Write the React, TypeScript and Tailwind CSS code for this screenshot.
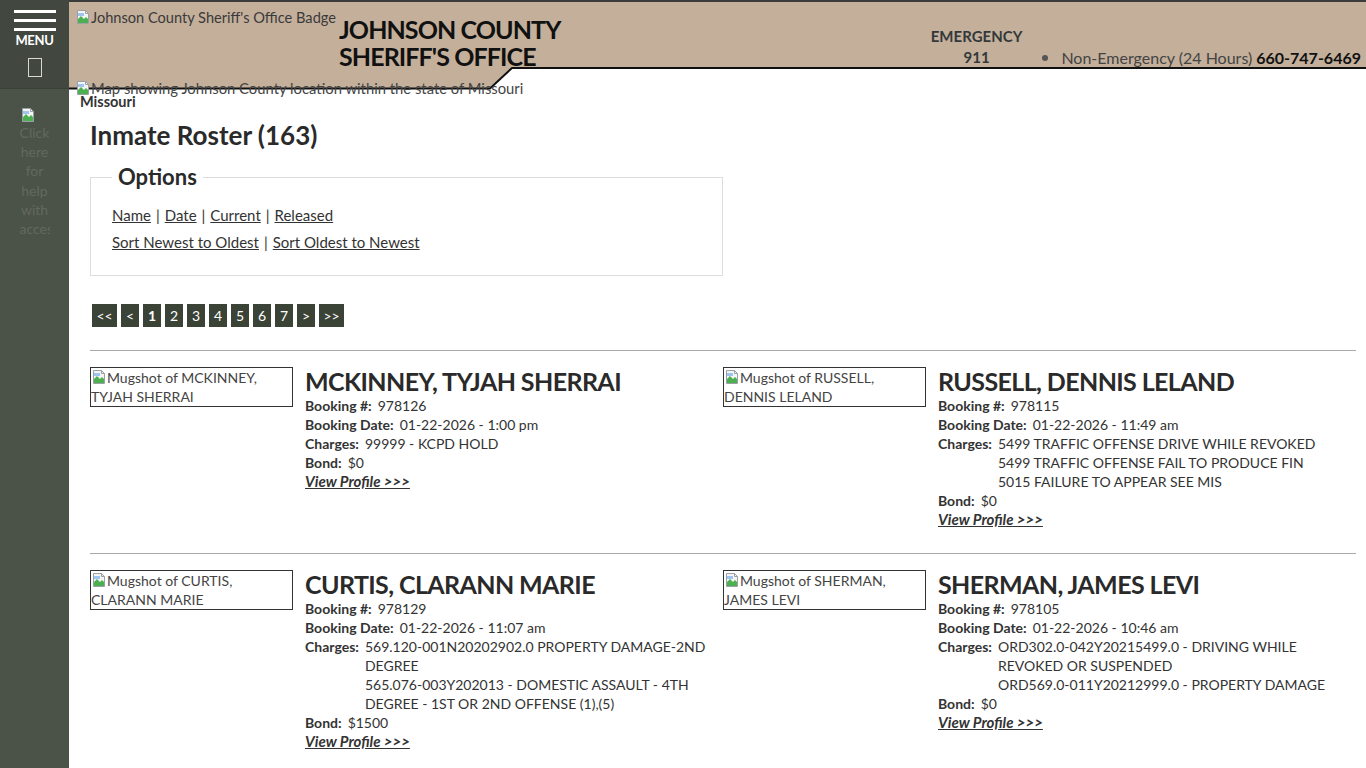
import React from "react";

const FONT = { fontFamily: "Lato, 'Open Sans', Arial, sans-serif" };

function BrokenImg() {
  return (
    <svg width="16" height="16" viewBox="0 0 16 16" className="inline-block shrink-0 align-[-2px]">
      <path d="M2.5 1.5h8l3 3v10h-11z" fill="#f4f4f4" stroke="#9aa0a6" />
      <path d="M10.5 1.5v3h3" fill="none" stroke="#9aa0a6" />
      <path d="M3 10l3-3 3 3 2-2 2 2v4H3z" fill="#4caf50" />
      <rect x="3" y="4" width="6" height="3" fill="#9ec5f0" />
    </svg>
  );
}

type Rec = {
  name: string;
  alt: string;
  booking: string;
  date: string;
  charges: string[][];
  bond: string;
};

const rows: Rec[][] = [
  [
    {
      name: "MCKINNEY, TYJAH SHERRAI",
      alt: "Mugshot of MCKINNEY, TYJAH SHERRAI",
      booking: "978126",
      date: "01-22-2026 - 1:00 pm",
      charges: [["99999 - KCPD HOLD"]],
      bond: "$0",
    },
    {
      name: "RUSSELL, DENNIS LELAND",
      alt: "Mugshot of RUSSELL, DENNIS LELAND",
      booking: "978115",
      date: "01-22-2026 - 11:49 am",
      charges: [
        ["5499 TRAFFIC OFFENSE DRIVE WHILE REVOKED"],
        ["5499 TRAFFIC OFFENSE FAIL TO PRODUCE FIN"],
        ["5015 FAILURE TO APPEAR SEE MIS"],
      ],
      bond: "$0",
    },
  ],
  [
    {
      name: "CURTIS, CLARANN MARIE",
      alt: "Mugshot of CURTIS, CLARANN MARIE",
      booking: "978129",
      date: "01-22-2026 - 11:07 am",
      charges: [
        ["569.120-001N20202902.0 PROPERTY DAMAGE-2ND", "DEGREE"],
        ["565.076-003Y202013 - DOMESTIC ASSAULT - 4TH", "DEGREE - 1ST OR 2ND OFFENSE (1),(5)"],
      ],
      bond: "$1500",
    },
    {
      name: "SHERMAN, JAMES LEVI",
      alt: "Mugshot of SHERMAN, JAMES LEVI",
      booking: "978105",
      date: "01-22-2026 - 10:46 am",
      charges: [
        ["ORD302.0-042Y20215499.0 - DRIVING WHILE", "REVOKED OR SUSPENDED"],
        ["ORD569.0-011Y20212999.0 - PROPERTY DAMAGE"],
      ],
      bond: "$0",
    },
  ],
];

function Record({ r }: { r: Rec }) {
  return (
    <div className="flex items-start">
      <div className="w-[203px] h-[40px] border border-[#333] overflow-hidden text-[14px] leading-[19px] text-[#444] shrink-0">
        <BrokenImg />
        {r.alt}
      </div>
      <div className="ml-[12px] text-[14px] leading-[19px] text-[#333]">
        <div className="text-[25px] font-bold leading-[29px] tracking-[-0.6px] text-[#2a2a2a]">{r.name}</div>
        <div>
          <span className="font-bold">Booking #:</span>
          <span className="ml-[6px]">{r.booking}</span>
        </div>
        <div>
          <span className="font-bold">Booking Date:</span>
          <span className="ml-[6px]">{r.date}</span>
        </div>
        <div className="flex">
          <span className="font-bold">Charges:</span>
          <div className="ml-[6px]">
            {r.charges.map((c, i) => (
              <div key={i}>
                {c.map((l, j) => (
                  <div key={j}>{l}</div>
                ))}
              </div>
            ))}
          </div>
        </div>
        <div>
          <span className="font-bold">Bond:</span>
          <span className="ml-[6px]">{r.bond}</span>
        </div>
        <a href="#" className="text-[15px] font-bold italic underline text-[#333]">
          View Profile &gt;&gt;&gt;
        </a>
      </div>
    </div>
  );
}

function Sep() {
  return <span className="mx-[5px]">|</span>;
}

export default function App() {
  const pages = ["<<", "<", "1", "2", "3", "4", "5", "6", "7", ">", ">>"];
  return (
    <div className="flex h-[768px] w-full overflow-hidden bg-white text-[#333]" style={FONT}>
      {/* Sidebar */}
      <div className="w-[69px] shrink-0 bg-[#4b5248] flex flex-col">
        <div className="h-[89px] bg-[#42483f] border-b border-[#3a3f37] flex flex-col items-center pt-[10px]">
          <div className="w-[42px] flex flex-col gap-[6px]">
            <div className="h-[3px] bg-white" />
            <div className="h-[3px] bg-white" />
            <div className="h-[3px] bg-white" />
          </div>
          <div className="text-white font-bold text-[13px] leading-[16px] mt-[1px] tracking-[-0.3px]">MENU</div>
          <div className="w-[14px] h-[19px] border border-[#d8d8d8] mt-[10px]" />
        </div>
        <div className="mt-[18px] mx-auto w-[30px] h-[130px] overflow-hidden text-center text-[14px] leading-[19.2px] text-[#62695e]">
          <div className="h-[16px] flex justify-start">
            <BrokenImg />
          </div>
          Click here for help with accessibility
        </div>
      </div>

      {/* Main */}
      <div className="flex-1 min-w-0">
        <div className="relative h-[80px]">
          <svg className="absolute left-0 top-0" width="1297" height="90" viewBox="0 0 1297 90">
            <polygon points="0,0 1297,0 1297,68 443,68 421,88 0,88" fill="#c3af9a" />
            <line x1="0" y1="1" x2="1297" y2="1" stroke="#3b3b3b" strokeWidth="2" />
            <polyline points="0,88.5 421,88.5 443,68 1297,68" fill="none" stroke="#111" strokeWidth="2" />
          </svg>
          <div className="relative flex h-full">
            <div className="pl-[6px] pt-[8px] w-[270px] text-[14.6px] leading-[19px] text-[#3a3a3a] whitespace-nowrap">
              <BrokenImg />
              Johnson County Sheriff's Office Badge
            </div>
            <div className="pt-[16px] text-[25px] font-bold leading-[27px] tracking-[-0.9px] text-[#111]">
              JOHNSON COUNTY
              <br />
              SHERIFF'S OFFICE
            </div>
            <div className="ml-auto flex items-start pt-[26px] pr-[5px]">
              <div className="text-center font-bold text-[15px] leading-[21px] text-[#33393a]">
                <div>EMERGENCY</div>
                <div>911</div>
              </div>
              <div className="mt-[21px] ml-[20px] text-[16px] leading-[21px] text-[#444] flex items-center">
                <span className="inline-block w-[6px] h-[6px] rounded-full bg-[#555] mr-[13px]" />
                <span>Non-Emergency (24 Hours)</span>
                <span className="ml-[4px] font-bold text-[#111]">660-747-6469</span>
              </div>
            </div>
          </div>
        </div>
        <div className="relative pl-[6px] text-[14.8px] leading-[17px] text-[#444] whitespace-nowrap">
          <BrokenImg />
          Map showing Johnson County location within the state of Missouri
        </div>
        <div className="pl-[11px] mt-[-3px] text-[14.5px] font-bold leading-[15px] text-[#333]">Missouri</div>

        <div className="pl-[21px] pr-[10px]">
          <h1 className="mt-[10px] text-[26px] font-bold leading-[32px] text-[#2a2a2a]">Inmate Roster (163)</h1>

          <fieldset className="mt-[14px] w-[633px] border border-[#ddd] pl-[21px] pb-[23px]">
            <legend className="px-[6px] text-[22px] font-bold leading-[24px] text-[#2a2a2a]">Options</legend>
            <div className="mt-[17px] text-[15px] leading-[19px]">
              <a href="#" className="underline">Name</a>
              <Sep />
              <a href="#" className="underline">Date</a>
              <Sep />
              <a href="#" className="underline">Current</a>
              <Sep />
              <a href="#" className="underline">Released</a>
            </div>
            <div className="mt-[8px] text-[15px] leading-[19px]">
              <a href="#" className="underline">Sort Newest to Oldest</a>
              <Sep />
              <a href="#" className="underline">Sort Oldest to Newest</a>
            </div>
          </fieldset>

          <div className="mt-[28px] ml-[2px] flex gap-[4px]">
            {pages.map((p, i) => (
              <span
                key={i}
                className={`h-[23px] flex items-center justify-center bg-[#3b4236] text-white text-[14px] ${
                  p.length > 1 ? "w-[25px]" : "w-[18px]"
                } ${p === "1" ? "font-bold" : ""}`}
              >
                {p}
              </span>
            ))}
          </div>

          <div className="mt-[23px]">
            {rows.map((row, i) => (
              <div key={i} className="border-t border-[#aaa] pt-[16px] pb-[24px] grid grid-cols-2">
                {row.map((r, j) => (
                  <Record key={j} r={r} />
                ))}
              </div>
            ))}
          </div>
        </div>
      </div>
    </div>
  );
}
